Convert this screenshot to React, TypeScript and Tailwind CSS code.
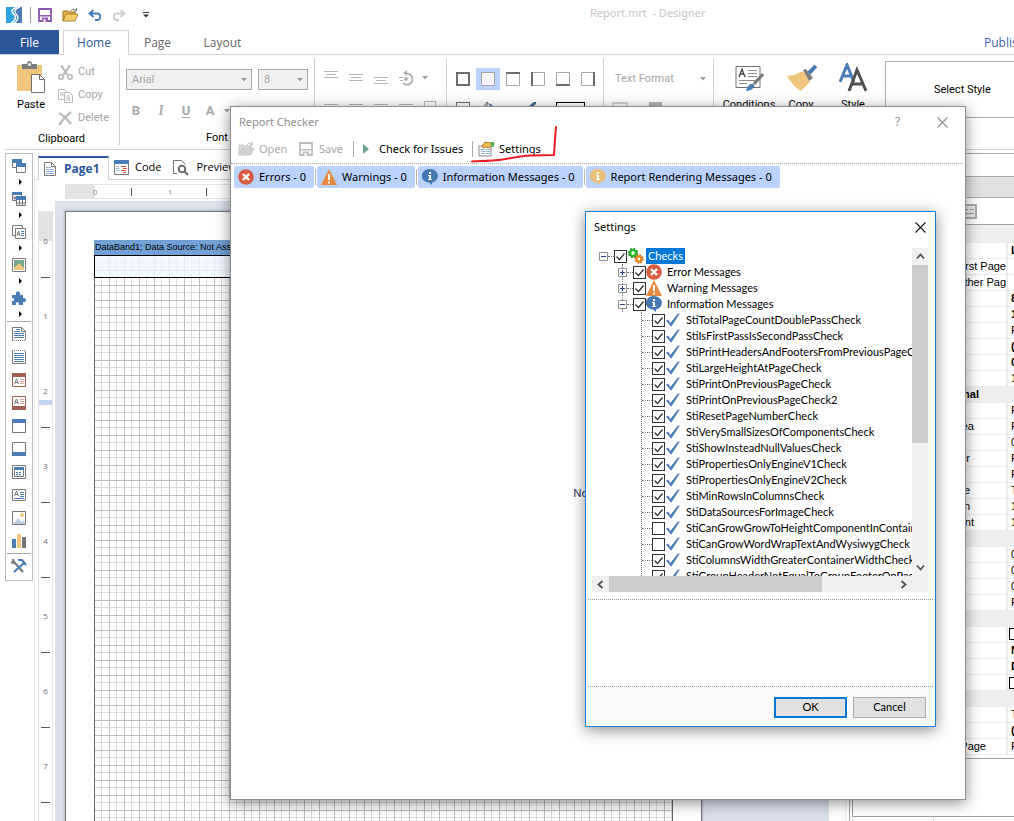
import React from "react";

type Kids = { children?: React.ReactNode };

function Svg({ w = 16, h = 16, children }: Kids & { w?: number; h?: number }) {
  return (
    <svg width={w} height={h} viewBox={`0 0 ${w} ${h}`} fill="none" aria-hidden="true" className="block shrink-0">
      {children}
    </svg>
  );
}

/* ---------- shared icons ---------- */

const Logo = () => (
  <Svg>
    <path d="M0 0h16v16H0z" fill="#2ea3e0" />
    <path d="M9 0h7v16H9z" fill="#4a7db5" />
    <path d="M11 0C5 2 5 5 8 7.500C11 10 9 14 5 16" stroke="#fff" strokeWidth="1.500" />
    <path d="M14 0C8 2 8 5 10.500 7.500C13 10 12 14 8 16" stroke="#fff" strokeWidth="1.300" />
  </Svg>
);

const Floppy = ({ color }: { color: string }) => (
  <Svg w={14} h={14}>
    <path d="M1 1h12v12H1z" stroke={color} strokeWidth="1.800" />
    <path d="M2 7h10v1.500H2zM4 9.500h6V14H4z" fill={color} />
    <path d="M5.500 11h2v3h-2z" fill="#fff" />
  </Svg>
);

const Folder = ({ gray }: { gray?: boolean }) => (
  <Svg w={16} h={14}>
    <path d="M1 13V3h5l1 1h6v3" fill={gray ? "#ddd" : "#e3b34f"} stroke={gray ? "#c4c4c4" : "#9c6f1b"} />
    <path d="M1 13L4 6h12l-3 7z" fill={gray ? "#d0d0d0" : "#f5ce6b"} stroke={gray ? "#c4c4c4" : "#9c6f1b"} strokeWidth=".8" />
    <path d="M9 3c1-2 3-2.500 5-1M14.500 0v3h-3" stroke={gray ? "#bbb" : "#777"} />
  </Svg>
);

const Undo = ({ color, flip }: { color: string; flip?: boolean }) => (
  <Svg w={14} h={13}>
    <g transform={flip ? "translate(14 0) scale(-1 1)" : undefined} stroke={color} strokeWidth="1.800">
      <path d="M5.500 1L1.500 4.500l4 3.500M2 4.500h6.500c5 0 5 6.500 0 6.500H7" />
    </g>
  </Svg>
);

const ErrorIcon = () => (
  <Svg>
    <circle cx="8" cy="8" r="7.800" fill="#d85c41" />
    <path d="M5 5l6 6M11 5l-6 6" stroke="#fff" strokeWidth="2.400" />
  </Svg>
);

const WarnIcon = () => (
  <Svg>
    <path d="M8 0l8 16H0z" fill="#e68a41" />
    <path d="M7 5h2v6H7zM7 12.500h2v2H7z" fill="#fff" />
  </Svg>
);

const InfoIcon = ({ color = "#4578b1" }: { color?: string }) => (
  <Svg>
    <path d="M8 0a7.800 6.800 0 0 1 2 13.400L10 16l-3-2.400A7.800 6.800 0 0 1 8 0z" fill={color} />
    <path d="M7 3h2v2H7zM6 6h3v4h1v1H6v-1h1V7H6z" fill="#fff" />
  </Svg>
);

const SettingsIcon = () => (
  <Svg>
    <path d="M1 5h12v10H1z" fill="#fff" stroke="#8a8a8a" />
    <path d="M3 8.500h4M3 10.500h4M3 12.500h4M8 8.500h4M8 10.500h4M8 12.500h4" stroke="#8cb0d9" />
    <path d="M4 5l3-4 6 1 1 3-4 2-2-1-3 1z" fill="#e9bb4f" stroke="#8d6d28" strokeWidth=".8" />
    <path d="M13 1l3 0v5l-3-1z" fill="#4caf50" />
  </Svg>
);

const BlueTick = () => (
  <Svg>
    <path d="M0 8.500l2-.8 2.600 3L11.500 2l2.500-.8L5.200 14.800z" fill="#4a7db5" />
  </Svg>
);

const Gears = () => (
  <Svg>
    <circle cx="5" cy="5" r="3" stroke="#26c32a" strokeWidth="2.600" />
    <circle cx="5" cy="5" r="4.400" stroke="#1d8a20" strokeWidth="1.600" strokeDasharray="1.700 1.750" />
    <circle cx="11" cy="11" r="2.500" stroke="#ef8a1c" strokeWidth="2.400" />
    <circle cx="11" cy="11" r="3.900" stroke="#c8680c" strokeWidth="1.600" strokeDasharray="1.500 1.560" />
  </Svg>
);

const Caret = ({ color = "#9a9a9a" }: { color?: string }) => (
  <Svg w={6} h={4}>
    <path d="M0 0h6L3 3.500z" fill={color} />
  </Svg>
);

const Close = ({ color, size }: { color: string; size: number }) => (
  <svg width={size} height={size} viewBox="0 0 11 11" fill="none" aria-hidden="true">
    <path d="M.5 .5l10 10M10.500 .5l-10 10" stroke={color} strokeWidth="1.100" />
  </svg>
);

/* ---------- title bar and tabs ---------- */

function TitleBar() {
  return (
    <header className="relative flex h-[30px] shrink-0 items-center pl-1.5">
      <Logo />
      <div className="ml-2 h-4 w-px bg-[#9a9a9a]" />
      <div className="ml-[7px] flex items-center gap-[10px]">
        <button aria-label="Save"><Floppy color="#8b57b0" /></button>
        <button aria-label="Open"><Folder /></button>
        <button aria-label="Undo"><Undo color="#3f7ab8" /></button>
        <button aria-label="Redo"><Undo color="#cccccc" flip /></button>
      </div>
      <button aria-label="Customize" className="ml-[17px]">
        <Svg w={6} h={6}>
          <path d="M0 .5h6" stroke="#333" />
          <path d="M0 2.500h6L3 5.500z" fill="#333" />
        </Svg>
      </button>
      <h1 className="absolute left-[590px] top-[5px] whitespace-pre font-['Noto_Sans',sans-serif] text-[11px] leading-4 text-[#c6c6c6]">Report.mrt  - Designer</h1>
    </header>
  );
}

function RibbonTabs() {
  return (
    <nav className="flex h-[25px] shrink-0 items-stretch border-b border-[#cfcfcf] text-[12px] text-[#666]">
      <button className="w-[59px] bg-[#2b579a] pt-0.5 text-white">File</button>
      <button className="-mb-px ml-1 w-[66px] border border-b-0 border-[#cfcfcf] bg-white pr-1 text-[#2b579a]">Home</button>
      <button className="w-[57px] pt-0.5">Page</button>
      <button className="ml-3 w-[49px] pt-0.5">Layout</button>
      <a href="#publish" className="ml-auto w-[31px] overflow-hidden whitespace-nowrap pl-px pt-px leading-6 text-[#3a5fae]">Publish</a>
    </nav>
  );
}

/* ---------- ribbon ---------- */

const Sep = () => <div className="mt-[3px] h-[87px] w-px shrink-0 bg-[#d0d0d0]" />;

function SmallCommand({ label, children }: Kids & { label: string }) {
  return (
    <button className="flex h-[23px] items-center gap-[5px] whitespace-nowrap text-[11px] text-[#a5a5a5]">
      {children}
      {label}
    </button>
  );
}

function BorderIcon({ side }: { side: string }) {
  const d: Record<string, string> = {
    all: "M1 1h12v12H1z",
    none: "",
    top: "M0 1h14",
    left: "M1 0v14",
    bottom: "M0 13h14",
    right: "M13 0v14",
  };
  return (
    <Svg w={14} h={14}>
      <path d="M.5 .5h13v13H.5z" fill={side === "none" ? "#f4f4f4" : "none"} stroke="#a5a5a5" />
      <path d={d[side]} stroke="#6d6d6d" strokeWidth="2" />
    </Svg>
  );
}

function BigCommand({ label, children }: Kids & { label: string }) {
  return (
    <button className="flex w-[52px] flex-col items-center gap-[5px] text-[11px] leading-4">
      {children}
      {label}
    </button>
  );
}

function Ribbon() {
  return (
    <section className="flex h-[94px] shrink-0 font-['Roboto',sans-serif] text-[11px] text-black">
      <div className="flex w-[119px] shrink-0 flex-col pl-1">
        <div className="flex pt-1.5">
          <button className="flex w-[54px] flex-col items-center gap-1">
            <Svg w={30} h={32}>
              <path d="M1 4h25v26H1z" fill="#efc67b" />
              <path d="M6 3h5c0-4 5-4 5 0h5v5H6z" fill="#7c7c7c" />
              <circle cx="13.500" cy="3.500" r="1.500" fill="#fff" />
              <path d="M15.500 13.500h8l5 5v13h-13z" fill="#fff" stroke="#6f6f6f" />
              <path d="M23.500 13.500v5h5" stroke="#6f6f6f" />
            </Svg>
            <span className="leading-4">Paste</span>
          </button>
          <div className="flex flex-col">
            <SmallCommand label="Cut">
              <Svg w={15} h={15}>
                <path d="M3 0l6.500 10M12 0L5.500 10" stroke="#b5b5b5" strokeWidth="2" />
                <circle cx="3" cy="12" r="2.200" stroke="#b5b5b5" strokeWidth="1.500" />
                <circle cx="12" cy="12" r="2.200" stroke="#b5b5b5" strokeWidth="1.500" />
              </Svg>
            </SmallCommand>
            <SmallCommand label="Copy">
              <Svg w={15} h={15}>
                <path d="M.5 1.500h6l2 2v8h-8zM2 5h4M2 7h4" fill="#fff" stroke="#b9b9b9" />
                <path d="M6.500 4.500h5l3 3v7h-8zM8 8h4M8 10h5M8 12h5" fill="#fff" stroke="#b9b9b9" />
              </Svg>
            </SmallCommand>
            <SmallCommand label="Delete">
              <Svg w={15} h={15}>
                <path d="M1 2c4 2 8 6 12 11M13 1C9 4 5 8 1 14" stroke="#bdbdbd" strokeWidth="2.500" />
              </Svg>
            </SmallCommand>
          </div>
        </div>
        <div className="text-center leading-[18px]">Clipboard</div>
      </div>
      <Sep />
      <div className="flex w-[194px] shrink-0 flex-col px-1.5 pt-[14px]">
        <div className="flex gap-1.5 text-[#a5a5a5]">
          <label className="relative flex items-center">
            <select aria-label="Font" className="h-[21px] w-[126px] appearance-none border border-[#a9a9a9] bg-[#f0f0f0] pl-[5px] leading-4">
              <option>Arial</option>
            </select>
            <span className="pointer-events-none absolute right-[5px]"><Caret /></span>
          </label>
          <label className="relative flex items-center">
            <select aria-label="Font size" className="h-[21px] w-[50px] appearance-none border border-[#a9a9a9] bg-[#f0f0f0] pl-[5px] leading-4">
              <option>8</option>
            </select>
            <span className="pointer-events-none absolute right-[5px]"><Caret /></span>
          </label>
        </div>
        <div className="mt-[11px] flex h-5 items-center text-[13px] font-bold text-[#a8a8a8]">
          <button className="w-5">B</button>
          <button className="ml-[5px] w-5 font-serif italic">I</button>
          <button className="ml-[5px] w-5 underline underline-offset-2">U</button>
          <button className="ml-1 w-5">A</button>
          <span className="ml-1"><Caret /></span>
        </div>
        <div className="mt-2 text-center leading-[18px]">Font</div>
      </div>
      <Sep />
      <div className="flex w-[131px] shrink-0 flex-col pl-[9px] pt-[14px]">
        <div className="flex items-center gap-[11px]">
          {[0, 1, 2].map((n) => (
            <button key={n} aria-label={`Align ${n + 1}`}>
              <Svg w={14} h={18}>
                <g transform={`translate(0 ${n * 3})`} stroke="#b5b5b5">
                  <path d="M0 2.500h14M2 5.500h10M0 8.500h14" />
                </g>
              </Svg>
            </button>
          ))}
          <button aria-label="Rotate" className="flex items-center gap-2">
            <Svg w={15} h={16}>
              <path d="M6 4a5.500 5.500 0 1 1-2 9" stroke="#b0b0b0" strokeWidth="2" />
              <path d="M8 0v6L4 3z" fill="#b0b0b0" />
              <circle cx="7" cy="9" r="2" fill="#b0b0b0" />
              <path d="M0 7.500h4M1 10.500h3" stroke="#b0b0b0" />
            </Svg>
            <Caret />
          </button>
        </div>
        <div className="mt-[17px] flex gap-[11px]">
          {[0, 1, 2, 3].map((n) => (
            <span key={n} className="h-px w-[14px] bg-[#b5b5b5]" />
          ))}
          <span className="-mt-[3px] h-2 w-3 border border-[#b5b5b5]" />
        </div>
      </div>
      <Sep />
      <div className="flex w-[156px] shrink-0 flex-col pl-1 pt-[13px]">
        <div className="flex gap-px">
          {["all", "none", "top", "left", "bottom", "right"].map((s) => (
            <button
              key={s}
              aria-label={`Border ${s}`}
              className={`flex h-[22px] w-6 items-center justify-center ${s === "none" ? "bg-[#bad2fc]" : ""}`}
            >
              <BorderIcon side={s} />
            </button>
          ))}
        </div>
        <div className="mt-3 flex pl-[5px]">
          <span className="h-3 w-[14px] border border-[#6d6d6d]" />
          <span className="ml-3"><Svg w={14} h={10}><path d="M1 6l4-6 7 8M5 0v6" stroke="#6d6d6d" /><path d="M8 2l4 5" stroke="#4a7db5" strokeWidth="2" /></Svg></span>
          <span className="ml-7"><Svg w={12} h={10}><path d="M12 0L5 6" stroke="#4a6d91" strokeWidth="3" /></Svg></span>
          <span className="ml-5 h-3 w-[29px] border border-black" />
        </div>
      </div>
      <Sep />
      <div className="flex w-[109px] shrink-0 flex-col pt-4">
        <button className="flex items-center justify-between pl-[11px] pr-[7px] leading-4 text-[#a5a5a5]">
          Text Format <Caret />
        </button>
        <div className="mt-[15px] flex gap-[21px] pl-2">
          <span className="h-3 w-4 border-2 border-[#d2d2d2]" />
          <span className="h-3 w-[13px] border-t-4 border-[#b5b5b5] bg-[#ddd]" />
        </div>
      </div>
      <Sep />
      <div className="flex w-[171px] shrink-0 pl-[9px] pt-2">
        <BigCommand label="Conditions">
          <Svg w={30} h={29}>
            <path d="M2 3.500h24v21H2z" fill="#fff" stroke="#6f6f6f" />
            <path d="M5 14l3-8 3 8M6 11h4" stroke="#444" strokeWidth="1.300" />
            <path d="M14 7.500h9M14 10.500h9M14 13.500h9M5 17.500h18M5 20.500h8" stroke="#8a8a8a" />
            <path d="M29 11l-9 10" stroke="#777" strokeWidth="3" />
            <path d="M12 28c1-4 4-8 7-7s2 6-7 7z" fill="#4a7db5" />
          </Svg>
        </BigCommand>
        <BigCommand label="Copy">
          <Svg w={32} h={29}>
            <path d="M2 13l7-1 9-4 7 11-9 9C11 25 6 20 2 13z" fill="#efc67b" />
            <path d="M18 7l3-1 7 9-4 3z" fill="#7c7c7c" />
            <path d="M31 3l-7 7" stroke="#4a7db5" strokeWidth="4" />
          </Svg>
        </BigCommand>
        <BigCommand label="Style">
          <Svg w={28} h={29}>
            <path d="M1 19L8 2l7 17M3 13h10" stroke="#4a7db5" strokeWidth="3" />
            <path d="M10 28L18 7l9 21M13 21h11" stroke="#505050" strokeWidth="3" />
          </Svg>
        </BigCommand>
      </div>
      <div className="mt-1.5 flex flex-1 flex-col border-l border-t border-[#ababab]">
        <div className="h-[56px] overflow-hidden whitespace-nowrap border-b border-[#ababab] pl-12 text-[11px] leading-[55px]">Select Style</div>
      </div>
    </section>
  );
}

/* ---------- toolbox ---------- */

const gray = "#777";
const blue = "#4a7db5";
const red = "#a0604f";

const groups: [string, React.ReactNode][] = [
  ["Bands", <g key="a"><path d="M.5 .5h9v8h-9z" stroke={gray} /><path d="M0 0h10v4H0z" fill={blue} /><path d="M4.500 5.500h9v8h-9z" fill="#fff" stroke={gray} /><path d="M4 4h10v4H4z" fill={blue} /></g>],
  ["Cross bands", <g key="b"><path d="M.5 .5h9v8h-9zM3 4v5M6 4v5M0 6h10" stroke={gray} /><path d="M0 0h10v3H0z" fill={blue} /><path d="M4.500 5.500h9v8h-9zM7.500 8v6M10.500 8v6M4 11h10" fill="#fff" stroke={gray} /><path d="M4 4h10v4H4z" fill={blue} /></g>],
  ["Components", <g key="c"><path d="M.5 .5h10v10H.5z" stroke={gray} /><path d="M3.500 3.500h10v10h-10z" fill="#fff" stroke={gray} /><path d="M5 11l1.500-5L8 11M5 9h3" stroke={gray} /><path d="M9 6.500h3M9 8.500h3M9 10.500h3" stroke={blue} /></g>],
  ["Images", <g key="d"><path d="M.5 .5h13v13H.5z" fill="#fff" stroke={gray} /><path d="M2 2h10v10H2z" fill="#75a491" /><path d="M2 12V10l5-5 5 5v2z" fill="#efc67b" /></g>],
  ["Plugins", <g key="e"><path d="M0 4h4c-1-5 5-5 4 0h3v3c4-1 4 5 0 4v3H7c0-4-4-3-3 0H0v-4c3 0 3-3 0-3z" fill={blue} /></g>],
];

const tools: [string, React.ReactNode][] = [
  ["Report title", <g key="a"><path d="M.5 13V.5h9l4 4V13" stroke={gray} /><path d="M9.500 .5v4h4" stroke={gray} /><path d="M0 13.500h14" stroke={gray} strokeDasharray="1 1" /><path d="M4 2.500h4M2 4.500h6M2 6.500h10M2 8.500h10M2 10.500h10" stroke={blue} /></g>],
  ["Report summary", <g key="b"><path d="M.5 1v12.500h13V1" stroke={gray} /><path d="M0 .5h14" stroke={gray} strokeDasharray="1 1" /><path d="M2 3.500h10M2 5.500h10M2 7.500h10M2 9.500h10M2 11.500h10" stroke={blue} /></g>],
  ["Page header", <g key="c"><path d="M.5 .5h13v13H.5z" stroke={red} /><path d="M0 0h14v4H0z" fill={red} /><path d="M2.500 11l2-5 2 5M3 9.500h3" stroke={gray} /><path d="M8 6.500h4M8 8.500h4M8 10.500h4" stroke="#d9a79b" /></g>],
  ["Page footer", <g key="d"><path d="M.5 .5h13v13H.5z" stroke={red} /><path d="M0 10h14v4H0z" fill={red} /><path d="M2.500 8l2-5 2 5M3 6.500h3" stroke={gray} /><path d="M8 3.500h4M8 5.500h4M8 7.500h4" stroke="#d9a79b" /></g>],
  ["Header", <g key="e"><path d="M.5 .5h13v13H.5z" stroke={gray} /><path d="M0 0h14v4H0z" fill={blue} /></g>],
  ["Footer", <g key="f"><path d="M.5 .5h13v13H.5z" stroke={gray} /><path d="M0 10h14v4H0z" fill={blue} /></g>],
  ["Data", <g key="g"><path d="M.5 .5h13v13H.5z" stroke={gray} /><path d="M2.500 2.500h9v9h-9z" stroke={gray} /><path d="M2 2h10v3H2z" fill={blue} /><path d="M4 7.500h6M4 9.500h6" stroke={blue} strokeDasharray="2 1" /></g>],
  ["Text", <g key="h"><path d="M.5 1.500h13v11H.5z" stroke={gray} /><path d="M2.500 8l2-5 2 5M3 6.500h3" stroke={gray} /><path d="M8 4.500h4M8 6.500h4M8 8.500h4M2 10.500h10" stroke={blue} /></g>],
  ["Image", <g key="i"><path d="M.5 .5h13v13H.5z" stroke={gray} /><circle cx="10" cy="4" r="2" fill="#efc67b" /><path d="M1 13l5-6 4 4 2-2 1 4z" fill="#bdd0e8" /></g>],
  ["Chart", <g key="j"><path d="M0 5h4v9H0z" fill={blue} /><path d="M5 0h4v14H5z" fill="#efc67b" /><path d="M10 3h4v11h-4z" fill={gray} /></g>],
];

function Toolbox() {
  return (
    <aside className="ml-[5px] mt-[3px] flex w-7 shrink-0 flex-col items-center self-start border border-[#bcbcbc] pb-0.5 pt-0.5">
      {groups.map(([name, art]) => (
        <button key={name} aria-label={name} className="flex h-[33px] flex-col items-center justify-start">
          <span className="flex h-5 items-center"><Svg w={14} h={14}>{art}</Svg></span>
          <span className="flex h-[11px] items-center pl-0.5"><Svg w={3} h={6}><path d="M0 0l3 3-3 3z" fill="#000" /></Svg></span>
        </button>
      ))}
      <div className="h-px w-6 bg-[#ababab]" />
      {tools.map(([name, art]) => (
        <button key={name} aria-label={name} className="flex h-[23px] items-center"><Svg w={14} h={14}>{art}</Svg></button>
      ))}
      <div className="mt-px h-px w-6 bg-[#ababab]" />
      <button aria-label="Tools" className="flex h-6 items-center">
        <Svg w={16} h={14}>
          <path d="M2 0l1 3 9 10M0 3l3 1" stroke={gray} strokeWidth="2.200" />
          <path d="M13 4L3 13M7 1h4l4 5" stroke={blue} strokeWidth="2.200" />
        </Svg>
      </button>
    </aside>
  );
}

/* ---------- report page ---------- */

function Workspace() {
  return (
    <main className="ml-px flex min-w-0 flex-1 flex-col border-l border-[#ececec]">
      <div className="mt-1.5 flex h-6 shrink-0 text-[11px]">
        <div className="w-[3px] border-b border-[#cfcfcf]" />
        <button className="flex w-[71px] items-center gap-2 border-x border-t-2 border-x-[#cfcfcf] border-t-[#2b579a] pl-[5px] font-bold text-[#2b579a]">
          <Svg w={12} h={14}>
            <path d="M.5 .5h7l4 4v9H.500zM7.500 .5v4h4" stroke={gray} />
            <path d="M2 5.500h5M2 7.500h8M2 9.500h8M2 11.500h8" stroke="#91b3d7" />
          </Svg>
          <span className="text-[12px]">Page1</span>
        </button>
        <div className="flex flex-1 items-center border-b border-[#cfcfcf]">
          <button className="flex items-center gap-1.5 pl-[5px]">
            <Svg w={15} h={15}>
              <path d="M.5 .5h14v14H.5z" stroke={gray} />
              <path d="M0 0h15v4H0z" fill={blue} />
              <path d="M2 6.500h3M2 8.500h3M2 10.500h3" stroke="#91b3d7" />
              <path d="M7 6.500h5M9 8.500h4M7 10.500h5M9 12.500h3" stroke="#d85c41" />
            </Svg>
            Code
          </button>
          <button className="flex items-center gap-[7px] pl-3">
            <Svg w={16} h={16}>
              <path d="M4 13.500H.5V.5h8l4 4" stroke={gray} />
              <circle cx="9" cy="9" r="3.300" stroke="#6d6d6d" strokeWidth="2" />
              <path d="M11 11l4 4" stroke="#6d6d6d" strokeWidth="2" />
            </Svg>
            Preview
          </button>
        </div>
      </div>
      <div className="ml-[30px] mt-1 flex h-[15px] shrink-0 items-center border-y border-[#e2e2e2] text-[8px] text-[#777]">
        <div className="h-full w-[30px] bg-[#e3e3e3]" />
        {[0, 1, 2, 3, 4, 5, 6].map((n) => (
          <div key={n} className="flex w-[75px] shrink-0 items-center">
            <span className="-ml-1 w-2 text-center text-[#5f8f8f]">{n}</span>
            <span className="ml-8 h-2 w-px bg-[#555]" />
          </div>
        ))}
      </div>
      <div className="mt-0.5 flex min-h-0 flex-1">
        <div className="ml-[3px] mt-2.5 flex w-[15px] shrink-0 flex-col overflow-hidden border-x border-[#e2e2e2] text-[8px] text-[#667]">
          <div className="h-[30px] shrink-0 bg-[#e3e3e3]" />
          {[0, 1, 2, 3, 4, 5, 6, 7].map((n) => (
            <div key={n} className="flex h-[75px] shrink-0 flex-col items-center">
              <span className="-mt-1 h-2 leading-[8px]">{n}</span>
              <span className="mt-8 h-px w-[9px] bg-[#555]" />
              {n === 1 && <span className="mt-12 h-[5px] w-full shrink-0 bg-[#c3d3f0]" />}
            </div>
          ))}
        </div>
        <div className="ml-0.5 mr-4 flex-1 overflow-hidden bg-[#dce1ea] pl-[10px] pt-[10px]">
          <div className="h-[900px] w-[637px] border border-[#777] bg-white pl-7 pr-7 pt-7 shadow-[0_0_2px_1px_#b4bac6]">
            <div className="h-full border-l border-r border-[#666] bg-[linear-gradient(to_right,#bdbdbd_1px,transparent_1px),linear-gradient(to_bottom,#bdbdbd_1px,transparent_1px),linear-gradient(to_right,#dcdcdc_1px,transparent_1px),linear-gradient(to_bottom,#dcdcdc_1px,transparent_1px)] bg-[size:15px_15px] bg-[position:14px_0,0_0,6px_0,0_7px]">
              <div className="-ml-px h-[15px] bg-[#6b9cd5]/95 pl-px text-[9px] leading-[15px] text-black font-['Liberation_Sans',sans-serif]">DataBand1; Data Source: Not Assigned</div>
              <div className="-ml-px h-[23px] border border-black bg-[#f0f7fe]/80" />
            </div>
          </div>
        </div>
      </div>
    </main>
  );
}

/* ---------- properties ---------- */

type Prop = [label: string, value: string, kind?: "first" | "head" | "bold" | "box"];

const props: Prop[] = [
  ["", "", "first"],
  ["", "L", "bold"],
  ["First Page", ""],
  ["Other Pag", ""],
  ["", "8", "bold"],
  ["", "1", "bold"],
  ["", "P"],
  ["", "(", "bold"],
  ["", "0", "bold"],
  ["", "1"],
  ["nal", "", "head"],
  ["", "F"],
  ["ea", "F"],
  ["", "0"],
  ["er", "F"],
  ["", "F"],
  ["e", "T"],
  ["n", "1"],
  ["nt", "1"],
  ["", "", "head"],
  ["", "0"],
  ["", "0"],
  ["", "0"],
  ["", "F"],
  ["", "", "head"],
  ["", "", "box"],
  ["", "N", "bold"],
  ["", "D", "bold"],
  ["", "", "box"],
  ["", "", "head"],
  ["", "T"],
  ["", "(", "bold"],
  ["Page", "F"],
];

function labelPad(label: string) {
  if (label === "First Page" || label === "Other Pag") return "pr-0";
  if (label === "Page") return "pr-5";
  if (label === "nal") return "pr-7";
  if (label === "ea" || label === "nt") return "pr-8";
  return "pr-9";
}

function rowStyle(kind?: string) {
  if (kind === "first") return "h-[18px] bg-[#eeeeee]";
  if (kind === "head") return "h-4 bg-[#eeeeee] font-bold";
  return "h-4 border-b border-[#ececec]";
}

function Properties() {
  return (
    <aside className="flex w-[169px] shrink-0 flex-col border-l border-[#ececec] pl-[3px] font-['Liberation_Sans',sans-serif] text-[11px] text-black">
      <div className="mt-[3px] flex flex-1 flex-col border-l border-t border-[#a9a9a9] pl-0.5">
        <div className="mt-[22px] h-[22px] shrink-0 border-y border-[#a9a9a9] bg-[#e1e1e1]" />
        <div className="flex h-[26px] shrink-0 items-center pl-[109px]">
          <Svg w={16} h={15}>
            <path d="M1 1h14v13H1z" fill="#e8e8e8" stroke="#a9a9a9" strokeWidth="2" />
            <path d="M3 5.500h4M9 5.500h4M3 9.500h10" stroke="#999" />
          </Svg>
        </div>
        <table className="w-full table-fixed border-collapse border-y border-[#a0a0a0]">
          <tbody>
            {props.map(([label, value, kind], i) => {
              const head = kind === "head" || kind === "first";
              return (
                <tr key={i} className={rowStyle(kind)}>
                  <td className={`w-[155px] overflow-hidden whitespace-nowrap p-0 text-right leading-[15px] ${labelPad(label)} ${head ? "" : "border-r-2 border-[#ececec]"}`}>{label}</td>
                  <td className={`overflow-hidden p-0 pl-[3px] leading-[15px] ${kind === "bold" ? "font-bold" : ""}`}>
                    {kind === "box" ? <span className="-ml-0.5 block h-3 w-5 border border-black" /> : value}
                  </td>
                </tr>
              );
            })}
          </tbody>
        </table>
        <div className="mt-[3px] h-[59px] shrink-0 border border-r-0 border-[#a0a0a0]" />
        <div className="mt-0.5 flex-1">
          <div className="h-full w-[82px] border-x border-[#cfcfcf]" />
        </div>
      </div>
    </aside>
  );
}

/* ---------- report checker window ---------- */

const chip = "flex h-[22px] items-center gap-[5px] whitespace-nowrap rounded-[2px] bg-[#bad2fc] pl-1 pr-2";
const ChipSep = () => <span className="h-4 w-px bg-[#b5b5b5]" />;

function ReportChecker() {
  return (
    <section
      aria-label="Report Checker"
      className="absolute left-[230px] top-[106px] flex h-[694px] w-[736px] flex-col border border-[#8e8e8e] bg-white font-['Noto_Sans',sans-serif] text-[11px] text-black shadow-[0_3px_14px_rgba(0,0,0,0.45)]"
    >
      <div className="flex h-[30px] shrink-0 items-center pl-2 text-[#8e8e8e]">
        <h2 className="flex-1">Report Checker</h2>
        <button aria-label="Help" className="w-[45px] text-[12px]">?</button>
        <button aria-label="Close" className="flex w-[45px] justify-center"><Close color="#8e8e8e" size={11} /></button>
      </div>
      <div className="mr-0.5 flex h-[27px] shrink-0 items-center border-b border-dotted border-[#a8a8a8] pb-0.5 pl-[7px]">
        <button className="flex w-[61px] items-center gap-[5px] text-[#a8a8a8]"><Folder gray />Open</button>
        <button className="flex w-[54px] items-center gap-1.5 text-[#a8a8a8]"><Floppy color="#bdbdbd" />Save</button>
        <span className="h-4 w-px bg-[#a8a8a8]" />
        <button className="ml-[9px] flex w-[109px] items-center gap-2.5 whitespace-nowrap">
          <Svg w={6} h={12}><path d="M0 1l6 5-6 5z" fill="#6aa391" /></Svg>
          Check for Issues
        </button>
        <span className="h-4 w-px bg-[#a8a8a8]" />
        <button className="ml-[5px] flex items-center gap-[5px]"><SettingsIcon />Settings</button>
      </div>
      <div className="flex items-center gap-px pl-[3px] pt-0.5">
        <button className={chip}><ErrorIcon />Errors - 0</button>
        <ChipSep />
        <button className={chip}><WarnIcon />Warnings - 0</button>
        <ChipSep />
        <button className={chip}><InfoIcon />Information Messages - 0</button>
        <ChipSep />
        <button className={chip}><InfoIcon color="#e8bf78" />Report Rendering Messages - 0</button>
      </div>
      <p className="flex flex-1 items-center justify-center text-[#1f2a5a]">No issues</p>
      <svg width="90" height="40" viewBox="0 0 90 40" fill="none" aria-hidden="true" className="absolute left-[238px] top-[18px]">
        <path d="M3 36.500C12 36 22 36 30 35C44 33 50 31 62 30.500L85 30L86 14L87 2" stroke="#ed1c24" strokeWidth="2" strokeLinecap="round" />
      </svg>
    </section>
  );
}

/* ---------- settings window ---------- */

function Check({ on = true, label }: { on?: boolean; label: string }) {
  return (
    <span className="grid shrink-0">
      <input
        type="checkbox"
        defaultChecked={on}
        aria-label={label}
        className="peer col-start-1 row-start-1 size-[13px] appearance-none border border-[#333] bg-white"
      />
      <svg width="13" height="13" viewBox="0 0 13 13" fill="none" aria-hidden="true" className="pointer-events-none invisible col-start-1 row-start-1 peer-checked:visible">
        <path d="M2.500 6.500l3 3 5-6" stroke="#333" strokeWidth="1.300" />
      </svg>
    </span>
  );
}

function Expander({ open }: { open: boolean }) {
  return (
    <button aria-label={open ? "Collapse" : "Expand"} className="z-10 shrink-0 bg-white">
      <Svg w={9} h={9}>
        <path d="M.5 .5h8v8h-8z" fill="#fff" stroke="#919191" />
        <path d={open ? "M2 4.500h5" : "M2 4.500h5M4.500 2v5"} stroke="#2b3f8c" />
      </Svg>
    </button>
  );
}

const Dots = ({ long }: { long?: boolean }) => (
  <span className={`h-px shrink-0 border-t border-dotted border-[#777] ${long ? "w-[10px]" : "w-[6px]"}`} />
);

const checks: [string, boolean][] = [
  ["StiTotalPageCountDoublePassCheck", true],
  ["StiIsFirstPassIsSecondPassCheck", true],
  ["StiPrintHeadersAndFootersFromPreviousPageCheck", true],
  ["StiLargeHeightAtPageCheck", true],
  ["StiPrintOnPreviousPageCheck", true],
  ["StiPrintOnPreviousPageCheck2", true],
  ["StiResetPageNumberCheck", true],
  ["StiVerySmallSizesOfComponentsCheck", true],
  ["StiShowInsteadNullValuesCheck", true],
  ["StiPropertiesOnlyEngineV1Check", true],
  ["StiPropertiesOnlyEngineV2Check", true],
  ["StiMinRowsInColumnsCheck", true],
  ["StiDataSourcesForImageCheck", true],
  ["StiCanGrowGrowToHeightComponentInContainerCheck", false],
  ["StiCanGrowWordWrapTextAndWysiwygCheck", false],
  ["StiColumnsWidthGreaterContainerWidthCheck", true],
  ["StiGroupHeaderNotEqualToGroupFooterOnPageCheck", true],
];

const Arrow = ({ d }: { d: string }) => (
  <Svg w={9} h={9}><path d={d} stroke="#505050" strokeWidth="1.800" /></Svg>
);

function SettingsDialog() {
  const categories: [string, React.ReactNode, boolean][] = [
    ["Error Messages", <ErrorIcon key="e" />, false],
    ["Warning Messages", <WarnIcon key="w" />, false],
    ["Information Messages", <InfoIcon key="i" />, true],
  ];
  return (
    <section
      aria-label="Settings"
      className="absolute left-[585px] top-[211px] flex h-[516px] w-[351px] flex-col border border-[#1a7fd4] bg-white font-['Lato',sans-serif] text-[11px] text-black shadow-[0_3px_14px_rgba(0,0,0,0.45)]"
    >
      <div className="flex h-[30px] shrink-0 items-center justify-between pl-2 pr-[9px]">
        <h2 className="font-['Noto_Sans',sans-serif] text-[11px]">Settings</h2>
        <button aria-label="Close"><Close color="#111" size={11} /></button>
      </div>
      <div className="ml-1.5 mr-[7px] mt-1.5 grid grid-cols-[minmax(0,1fr)_16px] grid-rows-[328px_16px]">
        <ul className="overflow-hidden whitespace-nowrap leading-4">
          <li className="flex h-4 items-center pl-[7px]">
            <Expander open />
            <Dots />
            <Check label="Checks" />
            <span className="ml-px"><Gears /></span>
            <span className="ml-0.5 bg-[#0078d7] px-0.5 text-white">Checks</span>
          </li>
          <li className="ml-[30px] border-l border-dotted border-[#777]">
            <ul className="-ml-[5px]">
              {categories.map(([name, icon, open]) => (
                <li key={name} className="flex h-4 items-center">
                  <Expander open={open} />
                  <Dots />
                  <Check label={name} />
                  {icon}
                  <span className="ml-[5px]">{name}</span>
                </li>
              ))}
            </ul>
          </li>
          <li className="ml-[49px] border-l border-dotted border-[#777]">
            <ul>
              {checks.map(([name, on]) => (
                <li key={name} className="flex h-4 items-center">
                  <Dots long />
                  <Check on={on} label={name} />
                  <span className="ml-px"><BlueTick /></span>
                  <span className="ml-1">{name}</span>
                </li>
              ))}
            </ul>
          </li>
        </ul>
        <div className="flex flex-col items-center bg-[#f0f0f0]">
          <button aria-label="Scroll up" className="flex h-[17px] items-center"><Arrow d="M1 6.500l3.500-4 3.500 4" /></button>
          <div className="h-[178px] w-full bg-[#cdcdcd]" />
          <button aria-label="Scroll down" className="mt-auto flex h-[17px] items-center"><Arrow d="M1 2.500l3.500 4 3.500-4" /></button>
        </div>
        <div className="flex items-center bg-[#f0f0f0]">
          <button aria-label="Scroll left" className="flex w-[17px] justify-center"><Arrow d="M6.500 1l-4 3.500 4 3.500" /></button>
          <div className="h-full w-[213px] bg-[#cdcdcd]" />
          <button aria-label="Scroll right" className="ml-auto flex w-[17px] justify-center"><Arrow d="M2.500 1l4 3.500-4 3.500" /></button>
        </div>
        <div className="bg-[#f0f0f0]" />
      </div>
      <div className="mx-0.5 mt-[7px] flex-1 border-y border-dotted border-[#a0a0a0]" />
      <div className="mx-0.5 mb-0.5 flex h-[37px] shrink-0 items-center justify-end gap-1.5 bg-[#fafafa] pr-[7px] pt-1">
        <button className="h-[21px] w-[73px] border-2 border-[#0078d7] bg-[#e1e1e1]">OK</button>
        <button className="h-[21px] w-[73px] border border-[#adadad] bg-[#e1e1e1]">Cancel</button>
      </div>
    </section>
  );
}

export default function App() {
  return (
    <div className="relative flex h-screen flex-col overflow-hidden bg-white font-['Open_Sans',sans-serif]">
      <TitleBar />
      <RibbonTabs />
      <Ribbon />
      <div className="ml-[5px] h-px shrink-0 bg-[#cfcfcf]" />
      <div className="flex min-h-0 flex-1">
        <Toolbox />
        <Workspace />
        <Properties />
      </div>
      <ReportChecker />
      <SettingsDialog />
    </div>
  );
}
